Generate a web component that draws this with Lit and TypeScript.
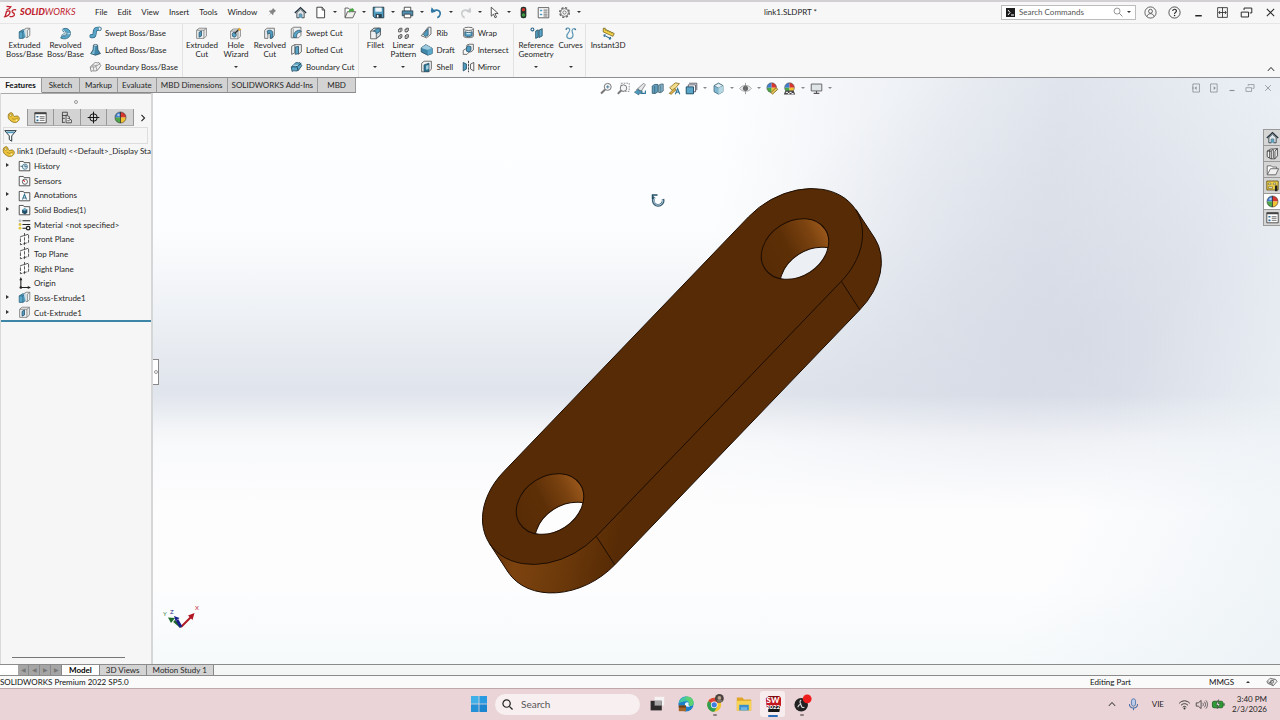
import { LitElement, html, svg, css, nothing } from "lit";
import { customElement, property } from "lit/decorators.js";

/* Icon bodies, each drawn on a 16 x 16 grid. */
const glyphs: Record<string, unknown> = {
  extrude: svg`<path d="M1.5 6l4-2.500h4v8l-3.500 2.500h-4.500z" fill="#5aa6c8" stroke="#2d6580"/><path d="M1.500 6h4.500v8M6 6l3.500-2.500" fill="none" stroke="#2d6580"/><path d="M7 3.500l3-2h4.500v9l-3 2.500h-2" fill="#eef2f4" fill-opacity=".8" stroke="#777"/><path d="M11.500 4v9M11.500 4l3-2.500" stroke="#777" fill="none"/>`,
  revolve: svg`<path d="M4 3c5-3.500 11 .5 10 6-1 5-7 7-12 4.500l2-3c3 1 5.500.5 6-2 .3-2-2-3.500-4.500-2.500z" fill="#5aa6c8" stroke="#2d6580"/><path d="M4 3l6 5.500M10 8.500L14 8" stroke="#dceaf2" fill="none"/><path d="M3 10l5-3 2 2-6 2z" fill="#cfe4ef" stroke="#2d6580" stroke-width=".7"/>`,
  sweep: svg`<path d="M3 12.500c5 1 3.500-4.500 4.500-7 .7-2 3-2.500 5.500-2" fill="none" stroke="#2d6580" stroke-width="5" stroke-linecap="round"/><path d="M3 12.500c5 1 3.500-4.500 4.500-7 .7-2 3-2.500 5.500-2" fill="none" stroke="#5aa6c8" stroke-width="3.200" stroke-linecap="round"/><ellipse cx="13.200" cy="3.500" rx="1.600" ry="2.200" fill="#e4eff5" stroke="#2d6580" stroke-width=".6"/>`,
  loft: svg`<path d="M5.500 2.500h5l.5 6 3 4.500-6 2-6-2 3-4.500z" fill="#3f86a8" stroke="#1f4a60"/><path d="M6 3l-.3 6L3 12.800l3.500 1L8 3z" fill="#7ebad5"/><ellipse cx="8" cy="2.800" rx="2.500" ry="1.100" fill="#dcebf2" stroke="#1f4a60" stroke-width=".6"/>`,
  boundary: svg`<path d="M1.500 8.500L7 3.500c2-1.500 3 1 5-.5l2.500 4-4 5.500c-3 2.500-5-.5-8 1.500z" fill="#f2f2f2" stroke="#777"/><path d="M2 9c3-2 4 1 6.500-1l5.500-4M8.500 8l1.500 5M4 6.500c2-1 4 1.500 6-.5M5 8l1 5" fill="none" stroke="#777" stroke-width=".8"/>`,
  cut: svg`<path d="M2 4l3-2.500h9v9.500l-3 3H2z" fill="#f0f1f2" stroke="#777"/><path d="M2 4h9v10M11 4l3-2.500" fill="none" stroke="#777"/><path d="M5 6.500l3-1.500v6l-3 1.500z" fill="#4f9cc0" stroke="#2d5870"/>`,
  hole: svg`<path d="M2 5l3-2.500h9v9l-3 3H2z" fill="#f0f1f2" stroke="#777"/><path d="M2 5h9v9.500" fill="none" stroke="#777"/><ellipse cx="6.500" cy="9.500" rx="2.500" ry="3" fill="#5aa6c8" stroke="#2d5870"/><path d="M7 8l6-6" stroke="#333" stroke-width="1.600"/><path d="M13 .5l.8 1.700 1.700.6-1.700.8-.8 1.700-.8-1.700-1.700-.6 1.700-.7z" fill="#f0b429"/>`,
  revcut: svg`<path d="M2 4l3-2.500h9V10l-3 4H9V9c0-2-3-2-3 0v5H2z" fill="#e8ecef" stroke="#666"/><path d="M5 5c3-2 7-1 7 2v6l-3 1V9c0-2-2.500-2-3 0z" fill="#4f9cc0" stroke="#2d5870"/>`,
  sweptcut: svg`<path d="M1.500 3.500l3-2h9v10l-3 3h-9z" fill="#eef0f1" stroke="#666"/><path d="M4 14c0-5 2-8 8-9l2 2c-5 1-6 3-6 7z" fill="#5aa6c8" stroke="#2d5870"/><path d="M4 3v8" stroke="#888"/>`,
  loftcut: svg`<path d="M2 4l4-2v10l-4 2zM6 2h8v9l-4 3V5" fill="#eef0f1" stroke="#555"/><path d="M6.500 5l4-1v9l-4 1z" fill="#5aa6c8" stroke="#2d5870"/>`,
  boundcut: svg`<path d="M1.500 8.500L7 3.500c2-1.500 3 1 5-.5l2.500 4-4 5.500c-3 2.500-5-.5-8 1.500z" fill="#5aa6c8" stroke="#234e63"/><path d="M2 9c3-2 4 1 6.500-1l5.500-4M8.500 8l1.500 5" fill="none" stroke="#163a4c"/><path d="M4 6.500c2-1 4 1.500 6-.5" stroke="#e4f1f7" fill="none"/>`,
  fillet: svg`<path d="M2 5l4-3.500h8v8.500l-5 4.500H2z" fill="#f0f1f2" stroke="#555"/><path d="M6 1.500h8V10l-5 4V8c0-2-1-3-3-3H2z" fill="#cfdfe7" stroke="#555"/><path d="M5.500 5c2 0 3.500 1 3.500 3.500L14 5c0-2-1-3.500-3-3.500z" fill="#4f9cc0" stroke="#2d5870"/>`,
  pattern: svg`<g fill="#f5f5f5" stroke="#333"><path d="M2 3l1.500-1.500H6v3L4.500 6H2zM10 3l1.500-1.500H14v3L12.500 6H10zM2 11l1.500-1.500H6v3L4.500 14H2zM10 11l1.500-1.500H14v3L12.500 14H10z"/></g><path d="M2 3h2.500v3M10 3h2.500v3M2 11h2.500v3M10 11h2.500v3" fill="none" stroke="#333" stroke-width=".7"/>`,
  rib: svg`<path d="M1.500 12L10 1.500h3.500V10L8 14.500z" fill="#eceff1" stroke="#555"/><path d="M4 10.500L10 3v8l-3 2z" fill="#4f9cc0" stroke="#2d5870"/>`,
  draft: svg`<path d="M1.500 6L7 2l8 4.500V13l-5.500 2-8-4z" fill="#3f86a8" stroke="#234e63"/><path d="M1.500 6L7 2l8 4.500-5.500 2z" fill="#9ccbe0"/><path d="M9.500 8.500L15 6.500V13l-5.500 2z" fill="#5aa6c8"/>`,
  shell: svg`<path d="M2 4l3-2.500h9v9.500l-3 3.500H2z" fill="#eef0f1" stroke="#555"/><path d="M5 6l6-2v10H5z" fill="#2f7899" stroke="#234e63"/><path d="M7.500 7l3-1v5l-3 1z" fill="#a9d3e5"/>`,
  wrap: svg`<path d="M2 3.500v9c0 2.500 12 2.500 12 0v-9" fill="#e6ebee" stroke="#555"/><ellipse cx="8" cy="3.500" rx="6" ry="2" fill="#fafafa" stroke="#555"/><path d="M3.500 7c3 1.500 6 1.500 9 0v5c-3 1.500-6 1.500-9 0z" fill="#4f9cc0" stroke="#2d5870"/><path d="M5.500 9.500h5" stroke="#e4f1f7" stroke-width="1.400"/>`,
  intersect: svg`<path d="M6 2.500l3-1h5v7l-3 2.500H6z" fill="#eef0f1" stroke="#555"/><path d="M1.500 9L5 7h4v4l-3 3H1.500z" fill="#fafafa" stroke="#555"/><path d="M5.500 5L8 3.500l3 1V9l-2.500 2-3-1z" fill="#4f9cc0" stroke="#2d5870"/>`,
  mirror: svg`<path d="M1.500 3l4 2v6l-4 2.500z" fill="#4f9cc0" stroke="#234e63"/><path d="M14.500 3l-4 2v6l4 2.500z" fill="#fafafa" stroke="#444"/><path d="M8 1v14" stroke="#222" stroke-dasharray="3 1"/>`,
  refgeo: svg`<path d="M7 5l3-1.500v9L7 14zM11 4l4-2v9l-4 2z" fill="#5aa6c8" stroke="#234e63"/><circle cx="3" cy="3" r="1.800" fill="#fff" stroke="#1f5f85" stroke-width="1.300"/>`,
  curves: svg`<path d="M2.500 2.500c1-2 5-1.500 4.500 1.500C6.500 7 3 8 3.500 11.500 4 15 10 15.500 11 11c.6-3-1.500-4-1-7 .3-2 3-2.500 4-1" fill="none" stroke="#5c98b5" stroke-width="1.500"/><circle cx="2.800" cy="2.800" r="1" fill="#3b7290"/><circle cx="14" cy="3" r="1" fill="#3b7290"/>`,
  instant: svg`<path d="M1.500 1.500h2.500v1.500l11 5-1.500 3.500-12-5.500z" fill="#f3d34a" stroke="#6b5a14" stroke-width=".9"/><path d="M4.500 4.500l.7-1.500M7 5.700l.7-1.500M9.500 6.800l.7-1.500M12 8l.7-1.500" stroke="#6b5a14" stroke-width=".8"/><path d="M2 10l9 4.500M2 10l2.500-.3M2 10l1.200 2M11 14.500l-1-2.200M11 14.500l-2.500.4" fill="none" stroke="#2a6c94" stroke-width="1.300"/>`,
  home: svg`<path d="M1 8.500L8 2l7 6.500" fill="none" stroke="#24323c" stroke-width="1.600"/><path d="M3.500 8v6.500h3V10h3v4.500h3V8L8 4z" fill="#dfe6ea" stroke="#24323c"/><path d="M6.500 10h3v4.500h-3z" fill="#5aa6c8"/>`,
  doc: svg`<path d="M3.500 1.500h6.500L13 5v9.500H3.500z" fill="#fff" stroke="#333" stroke-width="1.100"/><path d="M10 1.500V5h3" fill="none" stroke="#333"/>`,
  open: svg`<path d="M2.500 14V2.500h4L8 4h4v3" fill="#fafafa" stroke="#444"/><path d="M2.500 14.500L5.500 7h10L12 14.500z" fill="#f1f1ee" stroke="#444"/><path d="M7 7.500c0-3 1.500-4 4-4V2l3 2.800-3 2.700V6C9.500 6 8.500 6.500 8 8z" fill="#49a942"/>`,
  save: svg`<path d="M1.500 1.500h13v13h-11l-2-2z" fill="#4f9cc0" stroke="#263b47" stroke-width="1.200"/><path d="M4 2h8v5H4z" fill="#f1f5f7"/><path d="M4.500 10h7.500v4.500H4.500z" fill="#263b47"/><path d="M6 11h2v3H6z" fill="#fff"/>`,
  print: svg`<path d="M4 6V1.500h8V6" fill="#fff" stroke="#333"/><path d="M1.500 6h13v6h-13z" fill="#4f8fb0" stroke="#263b47"/><path d="M4 10h8v4.500H4z" fill="#fff" stroke="#333"/>`,
  undo: svg`<path d="M4 6.500c5-3 9-.5 8.500 3.500-.3 2-1.500 3.500-3.500 4.500" fill="none" stroke="#2f78a3" stroke-width="2"/><path d="M1 6l1-4.500 5 5.500-5 1.500z" fill="#2f78a3"/>`,
  redo: svg`<path d="M12 6.500c-5-3-9-.5-8.500 3.500.3 2 1.500 3.500 3.500 4.500" fill="none" stroke="#c9cccd" stroke-width="2"/><path d="M15 6l-1-4.500L9 7l5 1.500z" fill="#c9cccd"/>`,
  cursor: svg`<path d="M4 1.500v11l2.700-2.500 2 4.500 1.800-.8-2-4.400h4z" fill="#fff" stroke="#333"/>`,
  light: svg`<rect x="4.500" y=".8" width="7" height="14.400" rx="3" fill="#25352b"/><circle cx="8" cy="4.500" r="2.100" fill="#d5332b"/><circle cx="8" cy="11" r="2.100" fill="#3f9b45"/>`,
  list: svg`<path d="M1.500 2h13v12.500h-13z" fill="#fff" stroke="#444"/><path d="M3.500 4.500h3v2h-3zM3.500 9.500h3v2h-3z" fill="#4f9cc0"/><path d="M8 5h5M8 7.500h5M8 10h5M8 12.300h5" stroke="#444"/>`,
  gear: svg`<circle cx="8" cy="8" r="5.800" fill="none" stroke="#666" stroke-width="2" stroke-dasharray="2.600 1.950"/><circle cx="8" cy="8" r="4.800" fill="#f7f7f7" stroke="#666"/><circle cx="8" cy="8" r="2" fill="none" stroke="#666"/>`,
  pin: svg`<path d="M9.500 1.500l5 5-1.500.5-2.500 2.500c0 1.500-.3 2.500-1 3.500L6.500 10l-5 4.500L6 9.500 3 6.500c1-.9 2-1 3.500-1L9 3z" fill="#848484"/>`,
  glass: svg`<circle cx="6.500" cy="6.500" r="4.800" fill="none" stroke="#777" stroke-width="1.200"/><path d="M10 10l5 5" stroke="#777" stroke-width="1.400"/>`,
  user: svg`<circle cx="8" cy="8" r="6.900" fill="none" stroke="#444"/><circle cx="8" cy="6.500" r="2.400" fill="none" stroke="#444"/><path d="M3.800 12.800c1-4.500 7.400-4.500 8.400 0" fill="none" stroke="#444"/>`,
  help: svg`<circle cx="8" cy="8" r="6.900" fill="none" stroke="#333"/><path d="M5.800 6.300c0-3 4.500-3 4.500-.2 0 1.700-2.200 1.700-2.200 3.700" fill="none" stroke="#222" stroke-width="1.400"/><circle cx="8.100" cy="11.800" r=".9" fill="#222"/>`,
  min: svg`<path d="M4 12h8" stroke="currentColor" stroke-width="1.800"/>`,
  span: svg`<path d="M2 2h12v12H2zM8 2v12M3.500 8h9M5 6L3.500 8 5 10M11 6l1.500 2L11 10" fill="none" stroke="currentColor"/>`,
  restore: svg`<path d="M1.500 7.500h9v6h-9zM5 5V2.500h9.500v6H12" fill="none" stroke="currentColor" stroke-width="1.200"/>`,
  close: svg`<path d="M3.500 3.500l9 9M12.500 3.500l-9 9" stroke="currentColor" stroke-width="1.300"/>`,
  prevwin: svg`<path d="M3 1.500h10.500v13H3zM3 6v4" fill="none" stroke="currentColor" stroke-width="1.300"/><path d="M9 5v6L5.500 8z" fill="currentColor"/>`,
  nextwin: svg`<path d="M2.500 1.500H13v13H2.500z" fill="none" stroke="currentColor" stroke-width="1.300"/><path d="M7.500 5v6L11 8z" fill="currentColor"/>`,
  part: svg`<path d="M1.500 5.500C2 1.500 7 .8 7.500 4.500c.2 2 1.500 2.800 3.500 1.800 3.500-1 5 2.700 3.500 5.200-2 3-6 3.500-8.500 1.500C3 11.500 1 9 1.500 5.500z" fill="#ecc53c" stroke="#8a6d12"/><circle cx="4.500" cy="5.200" r="1.400" fill="#fff5c8" stroke="#8a6d12" stroke-width=".7"/><path d="M6 9c2 1.800 5 1.300 7.500-.5" stroke="#8a6d12" stroke-width=".7" fill="none"/><circle cx="11.500" cy="11.500" r="1" fill="#fff5c8"/>`,
  props: svg`<path d="M1 2h14v12.500H1z" fill="#fff" stroke="#333"/><path d="M1 2h14v2H1z" fill="#444"/><path d="M3 6h2.500v2H3zM3 10.500h2.500v2H3z" fill="#2a6c94"/><path d="M7 7h6M7 9h6M7 11.500h6" stroke="#555"/>`,
  config: svg`<path d="M3 1.500h6v4H3zM3 5v9.500M3 9h3M3 14h3" fill="none" stroke="#333"/><path d="M7.500 5l4 2v3l2.500 1v3.500H7.500z" fill="#f4f4f4" stroke="#333"/><path d="M9 9h2M9 12h3" stroke="#333"/>`,
  target: svg`<circle cx="8" cy="8" r="4.600" fill="none" stroke="#111" stroke-width="1.200"/><path d="M8 .8v14.400M.8 8h14.400" stroke="#111" stroke-width="1.200"/>`,
  ball: svg`<path d="M8 8L8 1.200A6.800 6.800 0 0 0 1.200 8z" fill="#3f7fd0"/><path d="M8 8h6.800A6.800 6.800 0 0 0 8 1.200z" fill="#d8362f"/><path d="M8 8H1.200A6.800 6.800 0 0 0 8 14.800z" fill="#4ca64a"/><path d="M8 8v6.800A6.800 6.800 0 0 0 14.800 8z" fill="#f1c232"/><path d="M8 1.200v13.600" stroke="#222" stroke-width=".9"/><circle cx="8" cy="8" r="6.800" fill="none" stroke="#333" stroke-width=".7"/><circle cx="5.500" cy="5" r="1.500" fill="#fff" opacity=".6"/>`,
  chevron: svg`<path d="M5.500 3l5 5-5 5" fill="none" stroke="#222" stroke-width="1.700"/>`,
  funnel: svg`<path d="M1 2h14L9.500 8.500V15l-3-2V8.500z" fill="#fdfdfd" stroke="#24323c" stroke-width="1.200"/><path d="M2.500 3h11l-1.800 2.200H4.300z" fill="#4f9cc0"/>`,
  history: svg`<path d="M1.500 3h5l1 1.500h7v10h-13z" fill="#fafafa" stroke="#333"/><circle cx="8.500" cy="9.500" r="3.200" fill="#d9e8ef" stroke="#3d7794"/><path d="M8.500 7.500v2H11M3 9h3" stroke="#24506a" fill="none"/>`,
  sensors: svg`<path d="M1.500 3h5l1 1.500h7v10h-13z" fill="#fafafa" stroke="#333"/><circle cx="8.500" cy="9.500" r="3.200" fill="#fff" stroke="#444"/><path d="M8.500 9.500l-2-2" stroke="#c22" stroke-width="1.300"/>`,
  notes: svg`<path d="M1.500 3h5l1 1.500h7v10h-13z" fill="#fafafa" stroke="#333"/><path d="M5.500 13L8 6.500l2.500 6.500M6.500 11h3" stroke="#3d7794" stroke-width="1.300" fill="none"/>`,
  bodies: svg`<path d="M1.500 3h5l1 1.500h7v10h-13z" fill="#fafafa" stroke="#333"/><path d="M5 8.500l3-2 3.500 1.500v4l-3 2L5 12z" fill="#24506a"/><path d="M5 8.500l3-2 3.500 1.500-3 1.500z" fill="#6fb0cd"/>`,
  material: svg`<path d="M5.500 3.500H15M5.500 8H15M5.500 12.500H10" stroke="#222" stroke-width="1.300"/><circle cx="2.500" cy="3.500" r="1.800" fill="#b9bcc0"/><circle cx="2.500" cy="8" r="1.800" fill="#d9c24a"/><circle cx="2.500" cy="12.500" r="1.800" fill="#e4c93a"/><circle cx="12.500" cy="12.500" r="2.200" fill="none" stroke="#222" stroke-width="1.600"/>`,
  plane: svg`<path d="M3 4.500L13 1.500v10L3 14.500z" fill="#fdfdfd" stroke="#444" stroke-width="1.100" stroke-dasharray="4.500 1.200"/><path d="M8 0v16" stroke="#333" stroke-dasharray="4 1.300"/>`,
  origin: svg`<path d="M3.500 2v11H14" stroke="#222" stroke-width="1.300" fill="none"/><path d="M3.500 0L5.300 4H1.700zM16 13l-4 1.800v-3.600z" fill="#222"/><circle cx="3.500" cy="13" r="1.600" fill="#222"/>`,
  zoomfit: svg`<circle cx="9.500" cy="6" r="4.300" fill="#f4f6f7" stroke="#777" stroke-width="1.200"/><path d="M6.300 9.200l-5 5" stroke="#777" stroke-width="2.400"/><path d="M7.500 6h4M9.500 4v4" stroke="#3b6f90"/>`,
  zoomarea: svg`<path d="M5 1.500h10v10H5z" fill="none" stroke="#777" stroke-dasharray="2 1.300"/><circle cx="8" cy="7.500" r="4" fill="#f4f6f7" stroke="#777" stroke-width="1.200"/><path d="M5 10.500L1 14.700" stroke="#777" stroke-width="2.400"/>`,
  prevview: svg`<path d="M3 9.500L12 1.500l2 2L9 11z" fill="#e4e8ea" stroke="#777"/><path d="M9 14h5v-3.500" fill="none" stroke="#2f7899" stroke-width="1.400"/><path d="M.5 12.500L6 8.500V11h4v3H6v2z" fill="#4f9cc0" stroke="#2d5870" stroke-width=".7"/>`,
  section: svg`<path d="M1.500 5l3-2h4v9l-3 2h-4z" fill="#5f9fbd" stroke="#33586b"/><path d="M9.500 4l3-1.500h2.500v8.500l-3 2h-2.500z" fill="#8bbbd1" stroke="#44606e"/><path d="M4.500 5v9M12 4v9" stroke="#33586b" stroke-width=".8"/>`,
  annview: svg`<path d="M2 7l7-6 5 1-8 9z" fill="#f1dd8c" stroke="#8c6d22"/><path d="M1.500 14l6-6 2.500 1.500-6 5.500z" fill="#e0b24a" stroke="#8c6d22"/><path d="M9 15l2.800-7 2.700 7M10 12.500h3.500" stroke="#2f7899" stroke-width="1.400" fill="none"/>`,
  orient: svg`<path d="M1.500 6h9v8.500h-9z" fill="#5aa6c8" stroke="#24506a" stroke-width="1.200"/><path d="M4 6V3.500h9V12h-2.500" fill="none" stroke="#445" /><path d="M5 1.500h9.500V10" fill="none" stroke="#445"/>`,
  cube: svg`<path d="M2.500 4.500L8 1.500l5.500 3v7.500L8 15l-5.500-3z" fill="#7fb8d0" stroke="#446b7e"/><path d="M2.500 4.500L8 7.500l5.500-3L8 1.500z" fill="#e2f0f6" stroke="#446b7e" stroke-width=".8"/><path d="M8 7.500V15l5.500-3V4.500z" fill="#b6d7e4"/>`,
  eye: svg`<path d="M.8 8C4 3 12 3 15.200 8 12 12.500 4 12.500.8 8z" fill="#eceeef" stroke="#9a9a9a"/><circle cx="8" cy="7.800" r="3.200" fill="#666"/><path d="M8 1v14" stroke="#777" stroke-width=".8"/>`,
  scene: svg`<path d="M8 7V1A6 6 0 0 0 2 7z" fill="#3f7fd0"/><path d="M8 7h6a6 6 0 0 0-6-6z" fill="#d8362f"/><path d="M8 7H2a6 6 0 0 0 6 6z" fill="#4ca64a"/><path d="M8 7v6a6 6 0 0 0 6-6z" fill="#f1c232"/><circle cx="8" cy="7" r="6" fill="none" stroke="#555" stroke-width=".7"/><path d="M1 15.500l2-5h10l2 5z" fill="#444"/><path d="M3.500 12h2.500v1.500H3.500zM8 12h2.500v1.500H8zM6 13.500h2V15H6zM10.500 13.500H13V15h-2.500z" fill="#eee"/>`,
  appear: svg`<path d="M7 7V1A6 6 0 0 0 1 7z" fill="#3f7fd0"/><path d="M7 7h6a6 6 0 0 0-6-6z" fill="#d8362f"/><path d="M7 7H1a6 6 0 0 0 6 6z" fill="#4ca64a"/><path d="M7 7v6a6 6 0 0 0 6-6z" fill="#f1c232"/><circle cx="7" cy="7" r="6" fill="none" stroke="#555" stroke-width=".7"/><path d="M6 13l6.500-6 2 2-6.500 6z" fill="#e7c75e" stroke="#7b6420"/>`,
  monitor: svg`<path d="M1.500 2.500h13v8.500h-13z" fill="#dfe4e7" stroke="#666" stroke-width="1.200"/><path d="M8 11v3M4.500 14h7" stroke="#555" stroke-width="1.300"/>`,
  library: svg`<path d="M1.500 5L6 2.500h3L14 2v9l-3 3.500H6L1.500 12z" fill="#f5f5f5" stroke="#333"/><path d="M4.500 4v9.500M6.500 5v9.500M9 3.500v10M11 5v9.500M1.500 5l5 0L9 2.500M11 5l3-3" fill="none" stroke="#333"/>`,
  folder: svg`<path d="M1.500 14V3.500h5L8 5h5v2.500" fill="#fff" stroke="#555"/><path d="M1.500 14.500l4-7.500h10l-3.500 7.500z" fill="#f0f0f0" stroke="#555"/>`,
  palette: svg`<path d="M1 2.500h14v11H1z" fill="#f0d24c" stroke="#5b4b12"/><path d="M3 5h3v2H3zM9 5h3v2H9zM3 9.500h5v2H3z" fill="#fff" stroke="#5b4b12" stroke-width=".7"/><path d="M11 8h3v7h-3z" fill="#222"/>`,
  mic: svg`<rect x="5.500" y="1" width="5" height="9" rx="2.500" fill="#b9cbe8" stroke="#4a6fa5"/><path d="M3 7.500c0 6.500 10 6.500 10 0M8 12.500V15" fill="none" stroke="#4a6fa5" stroke-width="1.300"/>`,
  wifi: svg`<path d="M1.500 6.500c4-4 9-4 13 0M3.700 9c2.800-2.700 5.800-2.700 8.600 0M5.800 11.300c1.500-1.300 2.900-1.300 4.400 0" fill="none" stroke="#333" stroke-width="1.200"/><circle cx="8" cy="13" r="1.200" fill="#333"/>`,
  sound: svg`<path d="M1.500 6h2.500l3.500-3v10L4 10H1.500z" fill="none" stroke="#444" stroke-width="1.100"/><path d="M9.500 6c1 1.300 1 2.700 0 4M11.500 4.500c2 2.300 2 4.700 0 7M13.500 3c2.500 3 2.500 7 0 10" fill="none" stroke="#444"/>`,
  battery: svg`<rect x=".5" y="4" width="13" height="8" rx="2" fill="#2f9c35" stroke="#1c5c20"/><path d="M14 6.500h1.500v3H14z" fill="#1c5c20"/><path d="M8 2L5 8.500h2.500L6.500 13 10 7H7.500z" fill="#fff" stroke="#222" stroke-width=".6"/>`,
  up: svg`<path d="M3 11l5-5.500 5 5.500" fill="none" stroke="#222" stroke-width="1.600"/>`,
  tag: svg`<path d="M0 7l5-5 9 2 2 3-6 7-9-4z" fill="#eee" stroke="#333"/><circle cx="8" cy="7.500" r="2.500" fill="none" stroke="#333"/><path d="M1 7l9 6M3 10.500l9-7" stroke="#333" stroke-width=".8"/>`,
};

/* Taskbar program marks, each drawn on a 20 x 20 grid. */
const appGlyphs: Record<string, unknown> = {
  windows: svg`<g fill="#1b86cf"><path d="M0 0h9.500v9.500H0z" fill="#3fb0e8"/><path d="M10.500 0H20v9.500h-9.500z" fill="#2a9be0"/><path d="M0 10.500h9.500V20H0z" fill="#2591d6"/><path d="M10.500 10.500H20V20h-9.500z"/></g>`,
  tasks: svg`<path d="M7 1h12v11H7z" fill="#f5f3f3"/><path d="M2 6h14v12H2z" fill="#2c2a2b"/><path d="M7 6h9v6H7z" fill="#a8a5a6"/>`,
  edge: svg`<circle cx="10" cy="10" r="9.500" fill="#1d7fc9"/><path d="M1 9C2 3 7 .5 11 .5c6 0 9 4.500 8.500 8.500-.4 3-3 4-5.500 3.500 1-4-1-6-4-6S3 8 1 9z" fill="#42c6a6"/><path d="M11 .5c6 0 9 4.500 8.500 8.500-.4 3-3 4-5.500 3.500.7-4-.8-7.500-5-9z" fill="#6bd45f" opacity=".7"/><path d="M13.500 8.500c-3-2-6 1-4.500 3.500 1.500 2 5 1.800 6 1-1.500 0-2.500-2-1.500-4.500z" fill="#e9f6fb"/><path d="M1 12h9v7H1z" fill="#a5662b"/><path d="M1 12h9v2.500H1z" fill="#6e3f17"/>`,
  chrome: svg`<circle cx="9" cy="11" r="8.800" fill="#f4c430"/><path d="M9 11L1.400 6.600A8.800 8.800 0 0 1 16.600 6.600z" fill="#db4437"/><path d="M9 11L1.400 6.600A8.800 8.800 0 0 0 9 19.800l3.500-6z" fill="#2f9e52"/><circle cx="9" cy="11" r="4.200" fill="#fff"/><circle cx="9" cy="11" r="3.300" fill="#3f7de0"/><circle cx="15.500" cy="3" r="5.500" fill="#4a423c"/><circle cx="15.500" cy="2.500" r="2.400" fill="#b8a48f"/><path d="M11.500 6c2-2 6-2 8 0-2 3-6 3-8 0z" fill="#7c7268"/>`,
  files: svg`<path d="M1 2h7l2 2.500h9V18H1z" fill="#e0a526"/><path d="M1 6h18v12H1z" fill="#f8d352"/><path d="M4 11h12v7H4z" fill="#3c8fcb"/><path d="M6 14h8v4H6z" fill="#6db5e4"/>`,
  sw: svg`<path d="M1 3l4-3h13l2 2.500V12l-3 2H2z" fill="#c3181f"/><path d="M1 3l4-3h13l-4 3z" fill="#7d0d12"/><path d="M4 12.500h15l-1 7.500H4z" fill="#161616"/>`,
  obs: svg`<circle cx="9" cy="11" r="8.500" fill="#222"/><path d="M9 5c-2 1-2 4 0 5M5 14c0-2 2-4 4-3M13 14c-2 1-4 0-4-3" fill="none" stroke="#ddd" stroke-width="1.500"/><circle cx="16.500" cy="3.500" r="5.500" fill="#ee1c1c"/>`,
};

@customElement("sw-icon")
export class SwIcon extends LitElement {
  @property() name = "";
  @property() size = "m";
  static styles = css`
    :host { display: inline-flex; flex: none; }
    svg { display: block; overflow: visible; }
    .s { width: 10px; height: 10px; }
    .m { width: 13px; height: 13px; }
    .app { width: 16px; height: 16px; }
  `;
  render() {
    return this.size === "app"
      ? html`<svg class="app" viewBox="0 0 20 20" aria-hidden="true">${appGlyphs[this.name]}</svg>`
      : html`<svg class=${this.size} viewBox="0 0 16 16" aria-hidden="true">${glyphs[this.name]}</svg>`;
  }
}

interface Big { icon: string; label: string; drop?: boolean; size: string; }
interface Group { big: Big[]; small: [string, string][][]; }

const ribbon: Group[] = [
  {
    big: [
      { icon: "extrude", label: "Extruded Boss/Base", size: "wide" },
      { icon: "revolve", label: "Revolved Boss/Base", size: "wide" },
    ],
    small: [[["sweep", "Swept Boss/Base"], ["loft", "Lofted Boss/Base"], ["boundary", "Boundary Boss/Base"]]],
  },
  {
    big: [
      { icon: "cut", label: "Extruded Cut", size: "mid" },
      { icon: "hole", label: "Hole Wizard", size: "mid", drop: true },
      { icon: "revcut", label: "Revolved Cut", size: "mid" },
    ],
    small: [[["sweptcut", "Swept Cut"], ["loftcut", "Lofted Cut"], ["boundcut", "Boundary Cut"]]],
  },
  {
    big: [
      { icon: "fillet", label: "Fillet", size: "slim", drop: true },
      { icon: "pattern", label: "Linear Pattern", size: "slim", drop: true },
    ],
    small: [
      [["rib", "Rib"], ["draft", "Draft"], ["shell", "Shell"]],
      [["wrap", "Wrap"], ["intersect", "Intersect"], ["mirror", "Mirror"]],
    ],
  },
  {
    big: [
      { icon: "refgeo", label: "Reference Geometry", size: "wide", drop: true },
      { icon: "curves", label: "Curves", size: "slim", drop: true },
    ],
    small: [],
  },
  { big: [{ icon: "instant", label: "Instant3D", size: "wide" }], small: [] },
];

const quick: [string, boolean][] = [
  ["home", false], ["doc", true], ["open", true], ["save", true], ["print", true], ["undo", true],
  ["redo", true], ["cursor", true], ["light", false], ["list", false], ["gear", true],
];

const headsUp: [string, boolean][] = [
  ["zoomfit", false], ["zoomarea", false], ["prevview", false], ["section", false], ["annview", false],
  ["orient", true], ["cube", true], ["eye", true], ["appear", false], ["scene", true], ["monitor", true],
];

const tree: [string, string, boolean][] = [
  ["history", "History", true], ["sensors", "Sensors", false], ["notes", "Annotations", true],
  ["bodies", "Solid Bodies(1)", true], ["material", "Material <not specified>", false],
  ["plane", "Front Plane", false], ["plane", "Top Plane", false], ["plane", "Right Plane", false],
  ["origin", "Origin", false], ["extrude", "Boss-Extrude1", true], ["cut", "Cut-Extrude1", true],
];

@customElement("app-root")
export class AppRoot extends LitElement {
  static styles = css`
    :host {
      display: flex; flex-direction: column; height: 100vh; overflow: hidden;
      font: 8px/10px Lato, "Open Sans", sans-serif; color: #262626; background: #f7f7f7;
    }
    * { box-sizing: border-box; }
    button, input {
      font: inherit; color: inherit; background: none; border: 0; padding: 0; margin: 0; outline: 0;
    }
    button { display: inline-flex; align-items: center; justify-content: center; white-space: nowrap; }
    .drop { width: 0; height: 0; border: 2px solid transparent; border-top-color: #333; border-bottom: 0; flex: none; }

    .title { display: flex; align-items: center; height: 24px; flex: none; border-top: 2px solid #d2d0d2; border-bottom: 1px solid #e6e6e6; padding-bottom: 1px; }
    .brand { display: flex; align-items: center; gap: 3px; width: 95px; padding-left: 3px; color: #c0202c; flex: none; }
    .brand svg { width: 14px; height: 14px; }
    .word { font-size: 9px; font-style: italic; line-height: 12px; }
    .word b { font-weight: 900; }
    .menu { display: flex; align-items: center; gap: 10px; flex: none; width: 184px; }
    .quick { display: flex; align-items: center; flex: none; padding-left: 15px; gap: 7px; }
    .pair { display: inline-flex; align-items: center; gap: 6px; width: 22px; }
    .quick .pair:last-child { margin-left: 1px; }
    .file { flex: 1; text-align: center; }
    .search { display: flex; align-items: center; gap: 4px; width: 135px; height: 15px; padding: 0 4px; background: #fff; border: 1px solid #bdbdbd; }
    .search input { flex: 1; min-width: 0; }
    .search input::placeholder, .find input::placeholder { color: #555; opacity: 1; }
    .prompt { width: 9px; height: 9px; background: #1d1d1d; }
    .window { display: flex; gap: 11px; padding: 0 3px 0 8px; }

    .ribbon { display: flex; height: 54px; flex: none; border-bottom: 1px solid #8e8e8e; }
    .group { display: flex; border-right: 1px solid #e2e2e2; }
    .group:first-child { padding-left: 4px; }
    .group + .group { padding-left: 2px; }
    .group:last-of-type { border-right: 0; }
    .big { flex-direction: column; justify-content: flex-start; white-space: normal; line-height: 9px; padding-top: 3px; }
    .big span { height: 18px; margin-top: 1px; }
    .big .drop { margin-top: 7px; }
    .wide { width: 41px; }
    .mid { width: 34px; }
    .slim { width: 28px; }
    .stack { display: grid; grid-template-rows: repeat(3, 17px); padding: 0 4px 0 3px; align-content: start; }
    .stack button { justify-content: flex-start; gap: 3px; }
    .fold { margin-left: auto; align-self: flex-end; padding: 0 4px 3px; }

    .work { position: relative; flex: 1; min-height: 0; display: flex; }
    .side { width: 153px; flex: none; display: flex; flex-direction: column; background: #fff; }
    .tabs { display: flex; position: relative; z-index: 1; height: 15px; flex: none; width: max-content; }
    .tabs button { min-width: 38px; height: 15px; padding: 0 4px; background: #d3d3d3; border-right: 1px solid #9a9a9a; border-bottom: 1px solid #8a8a8a; }
    .tabs .on { min-width: 42px; background: #f7f7f7; border-bottom-color: #f7f7f7; font-weight: 700; color: #111; }
    .panel { flex: 1; min-height: 0; display: flex; flex-direction: column; background: #f6f6f6; border-right: 2px solid #d4d6d8; border-left: 1px solid #d9d9d9; }
    .grip { height: 16px; border-top: 1px solid #aaa; display: flex; align-items: center; justify-content: center; flex: none; }
    .grip i, .handle i { width: 4px; height: 4px; border: 1px solid #999; border-radius: 50%; }
    .modes { display: grid; grid-template-columns: repeat(5, 1fr) 17px; height: 17px; flex: none; }
    .modes button { background: #d3d3d3; border-right: 1px solid #999; border-bottom: 1px solid #aaa; }
    .modes .on, .modes .more { background: none; border-bottom: 0; }
    .modes .more { border: 0; }
    .filter { display: flex; align-items: center; gap: 4px; height: 17px; margin: 1px 3px 0 2px; border: 1px solid #ddd; flex: none; }
    .filter input { flex: 1; min-width: 0; }
    .tree { display: grid; grid-auto-rows: 1fr; height: 178px; margin: 0; padding: 0; list-style: none; flex: none; border-bottom: 2px solid #3d86a8; }
    .tree li { display: flex; align-items: center; gap: 3px; padding-left: 1px; white-space: nowrap; }
    .tree .root { gap: 2px; }
    .tree .node { padding-left: 4px; }
    .twist { width: 10px; height: 6px; flex: none; display: flex; padding-left: 1px; }
    .twist i { border: 2px solid transparent; border-width: 2px 0 2px 3px; border-left-color: #333; height: 0; }
    .scroll { margin: auto 26px 6px 11px; border-top: 1px solid #777; flex: none; }

    .view {
      flex: 1; min-width: 0; position: relative; display: flex; flex-direction: column;
      background:
        linear-gradient(115deg, rgba(236, 243, 246, 0) 80%, rgba(236, 242, 246, .9) 100%),
        linear-gradient(180deg, rgba(253, 253, 254, 0) 54%, rgba(253, 253, 254, .6) 62%, #fdfdfe 74%, #fdfdfe 86%, #f6fafb 100%),
        radial-gradient(ellipse 30% 50% at 82% 45%, rgba(210, 214, 226, .7), rgba(214, 219, 229, 0)),
        linear-gradient(97deg, rgba(222, 227, 235, 0) 48%, rgba(222, 227, 235, .9) 76%, rgba(230, 236, 242, .9) 90%, #e9eff4 100%),
        linear-gradient(180deg, #fdfeff 0, #fcfdfe 26%, #eef1f5 40%, #e0e4ec 53%, #e4e8ee 57%, #f2f4f7 63%);
    }
    .scene { position: absolute; inset: 0; width: 100%; height: 100%; }
    .handle { position: absolute; left: 0; top: 48%; width: 6px; height: 26px; background: #fff; border: 1px solid #888; border-left: 0; display: flex; align-items: center; justify-content: center; }
    .hud { position: relative; display: flex; align-items: center; justify-content: center; gap: 4px; height: 20px; }
    .hud .pair { gap: 5px; width: 23px; }
    .hud .drop { border-top-color: #888; }
    .docs { position: absolute; right: 7px; top: 3px; display: flex; gap: 7px; color: #8a8f93; }
    .docs button { width: 11px; height: 14px; }
    .pane { position: absolute; right: 0; top: 51px; display: flex; flex-direction: column; border-left: 1px solid #999; border-top: 1px solid #999; }
    .pane button { width: 16px; height: 16px; background: #d5d5d5; border-bottom: 1px solid #999; }
    .pane .on { background: #fff; }
    .axis { font-size: 6px; }

    .sheets { display: flex; height: 11px; flex: none; border-top: 1px solid #8b8b8b; background: #f4f5f5; }
    .sheets button { padding: 0 6px; background: #d3d3d3; border-right: 1px solid #888; }
    .sheets .on { background: #fff; font-weight: 700; color: #000; padding: 0 7px; }
    .steps { display: flex; padding-left: 18px; background: #fff; }
    .sheets .steps button { width: 11px; padding: 0; background: #a5a5a5; color: #777; font-size: 6px; }
    .status { display: flex; align-items: center; height: 13px; flex: none; border-top: 1px solid #8b8b8b; background: #fafafa; color: #111; }
    .status .mode { margin-left: auto; }
    .status .units { margin-left: 78px; gap: 12px; }
    .status .units .drop { transform: rotate(180deg); }
    .status .tagged { margin: 0 3px 0 17px; }

    .task { display: grid; grid-template-columns: 1fr auto 1fr; align-items: center; height: 32px; flex: none; background: #ead4d7; border-top: 1px solid #bfa8ac; padding-bottom: 1px; }
    .apps { grid-column: 2; display: flex; align-items: center; gap: 4px; }
    .app { position: relative; width: 25px; height: 26px; border-radius: 3px; }
    .app.on { background: #f7ecee; }
    .app.run::after { content: ""; position: absolute; bottom: 1px; left: 11px; width: 4px; height: 2px; border-radius: 1px; background: #8d7e81; }
    .app.on::after { left: 8px; width: 10px; background: #2b6cb8; bottom: 0; }
    .swmark { position: absolute; left: 5px; top: 6px; width: 16px; color: #fff; font-size: 8px; font-weight: 900; line-height: 7px; }
    .swmark small { display: block; font-size: 6px; line-height: 6px; }
    .find { display: flex; align-items: center; gap: 8px; width: 145px; height: 21px; padding: 0 7px; border-radius: 11px; background: #f7eff0; font-size: 10px; }
    .find input { flex: 1; min-width: 0; }
    .find svg { width: 11px; height: 11px; }
    .tray { display: flex; align-items: center; justify-content: flex-end; gap: 4px; padding-right: 13px; }
    .tray .key { margin: 0 10px 0 8px; }
    .tray .mic { margin-left: 6px; }
    .clock { text-align: right; line-height: 10px; min-width: 38px; display: block; }
  `;

  private tool(name: string, drop: boolean) {
    return drop
      ? html`<span class="pair"><button aria-label=${name}><sw-icon name=${name}></sw-icon></button><i class="drop"></i></span>`
      : html`<button aria-label=${name}><sw-icon name=${name}></sw-icon></button>`;
  }

  private scene() {
    return html`<svg class="scene" viewBox="153 78 1127 586" role="img" aria-label="Link part">
      <defs>
        <linearGradient id="side" gradientUnits="userSpaceOnUse" x1="500" y1="548" x2="612" y2="572">
          <stop offset="0" stop-color="#6a370a" /><stop offset=".15" stop-color="#7d430f" />
          <stop offset=".5" stop-color="#6f3b0b" /><stop offset="1" stop-color="#572b05" />
        </linearGradient>
        <linearGradient id="bore" x1="0" y1=".8" x2="1" y2=".3">
          <stop offset="0" stop-color="#562b05" /><stop offset=".45" stop-color="#5d2f07" />
          <stop offset=".75" stop-color="#7a420f" /><stop offset="1" stop-color="#a05c1e" />
        </linearGradient>
        <clipPath id="low"><ellipse cx="550" cy="504" rx="36" ry="27.500" transform="rotate(-33 550 504)" /></clipPath>
        <clipPath id="high"><ellipse cx="795" cy="249" rx="36" ry="27.500" transform="rotate(-33 795 249)" /></clipPath>
      </defs>
      <g stroke="#1d0d02" stroke-width="1">
        <path fill="url(#side)" d="M489.400 543.400L508 572A72.300 54.700 -33 0 0 614.800 564.800L859.800 309.800A72.300 54.700 -33 0 0 874.600 238L856 209.500L700 300z" />
        <path fill="#562b05" d="M503.700 471.700A72.300 54.700 -33 0 0 596.300 536.300L841.300 281.300A72.300 54.700 -33 0 0 748.700 216.700z" />
        <path d="M596.300 536.300l18.500 28.500M841.300 281.300l18.500 28.500" />
        <g fill="url(#bore)" stroke="none">
          <circle cx="550" cy="504" r="37" clip-path="url(#low)" />
          <circle cx="795" cy="249" r="37" clip-path="url(#high)" />
        </g>
        <g clip-path="url(#low)"><ellipse cx="568.500" cy="532.500" rx="36" ry="27.500" transform="rotate(-33 568.500 532.500)" fill="#fdfdfe" /></g>
        <g clip-path="url(#high)"><ellipse cx="813.500" cy="277.500" rx="36" ry="27.500" transform="rotate(-33 813.500 277.500)" fill="#eceff4" /></g>
        <g fill="none">
          <ellipse cx="550" cy="504" rx="36" ry="27.500" transform="rotate(-33 550 504)" />
          <ellipse cx="795" cy="249" rx="36" ry="27.500" transform="rotate(-33 795 249)" />
        </g>
      </g>
      <g class="axis">
        <path d="M181 627l11-11" stroke="#b01824" stroke-width="2" /><path d="M194.500 613l-2 7-4.500-4.500z" fill="#b01824" />
        <path d="M181 627l-7-6" stroke="#1f6b2c" stroke-width="2.500" /><path d="M168 617.500l7 .5-4 5z" fill="#1f6b2c" />
        <path d="M181 627l-4-7" stroke="#1a1f8c" stroke-width="3" /><path d="M174 616l5.500 2-4 3z" fill="#1a1f8c" />
        <text x="163" y="616" fill="#3c8a48">Y</text><text x="170" y="614" fill="#1a1f8c">Z</text><text x="195" y="610" fill="#c2303a">X</text>
      </g>
      <g fill="none">
        <path d="M654.500 197a5 5 0 1 0 8.500 2" stroke="#3b5f74" stroke-width="2.600" />
        <path d="M655 197.500a4.500 4.500 0 1 0 7.500 2" stroke="#b9d6e4" stroke-width="1" />
        <path d="M652.500 199v-4h5" stroke="#24506a" stroke-width="1.500" />
      </g>
    </svg>`;
  }

  render() {
    return html`
      <header class="title">
        <div class="brand">
          <svg viewBox="0 0 16 16" aria-hidden="true"><path d="M4 1.500l5 .5c-1 2-3 3-5 3.500M1 13.500c4 0 7-3 7-5.500 0-1.500-2-1.500-4-.5L2.500 13M15 5.500c-3-.8-5 .5-4.500 2.200.5 1.500 3 1.500 2.500 3.500-.4 1.800-3 2.500-5.500 1.800" fill="none" stroke="#c0202c" stroke-width="1.500" /></svg>
          <span class="word"><b>SOLID</b>WORKS</span>
        </div>
        <nav class="menu">
          ${["File", "Edit", "View", "Insert", "Tools", "Window"].map((m) => html`<button>${m}</button>`)}
          <button aria-label="Pin"><sw-icon name="pin" size="s"></sw-icon></button>
        </nav>
        <div class="quick">${quick.map(([n, d]) => this.tool(n, d))}</div>
        <div class="file">link1.SLDPRT *</div>
        <label class="search">
          <svg class="prompt" viewBox="0 0 9 9" aria-hidden="true"><path d="M2 2l2 2.500L2 7M5 7h3" fill="none" stroke="#fff" /></svg>
          <input type="text" placeholder="Search Commands" aria-label="Search Commands" />
          <sw-icon name="glass" size="s"></sw-icon><i class="drop"></i>
        </label>
        <div class="window">
          ${["user", "help", "min", "span", "restore", "close"].map((n) => html`<button aria-label=${n}><sw-icon name=${n}></sw-icon></button>`)}
        </div>
      </header>

      <div class="ribbon">
        ${ribbon.map((g) => html`<section class="group">
          ${g.big.map((b) => html`<button class="big ${b.size}"><sw-icon name=${b.icon}></sw-icon><span>${b.label}</span>${b.drop ? html`<i class="drop"></i>` : nothing}</button>`)}
          ${g.small.map((col) => html`<div class="stack">${col.map(([i, l]) => html`<button><sw-icon name=${i}></sw-icon>${l}</button>`)}</div>`)}
        </section>`)}
        <button class="fold" aria-label="Collapse"><sw-icon name="up" size="s"></sw-icon></button>
      </div>

      <main class="work">
        <aside class="side">
          <nav class="tabs">
            ${["Features", "Sketch", "Markup", "Evaluate", "MBD Dimensions", "SOLIDWORKS Add-Ins", "MBD"].map((t, i) => html`<button class=${i ? "" : "on"}>${t}</button>`)}
          </nav>
          <div class="panel">
            <div class="grip"><i></i></div>
            <div class="modes">
              ${["part", "props", "config", "target", "ball"].map((n, i) => html`<button class=${i ? "" : "on"} aria-label=${n}><sw-icon name=${n}></sw-icon></button>`)}
              <button class="more" aria-label="More"><sw-icon name="chevron" size="s"></sw-icon></button>
            </div>
            <label class="filter"><sw-icon name="funnel"></sw-icon><input type="text" aria-label="Filter" /></label>
            <ul class="tree">
              <li class="root"><sw-icon name="part"></sw-icon>link1 (Default) &lt;&lt;Default&gt;_Display Sta</li>
              ${tree.map(([i, l, open]) => html`<li class="node"><span class="twist">${open ? html`<i></i>` : nothing}</span><sw-icon name=${i}></sw-icon>${l}</li>`)}
            </ul>
            <div class="scroll"></div>
          </div>
        </aside>
        <section class="view">
          ${this.scene()}
          <div class="hud">${headsUp.map(([n, d]) => this.tool(n, d))}</div>
          <div class="docs">
            ${["prevwin", "nextwin", "min", "restore", "close"].map((n) => html`<button aria-label=${n}><sw-icon name=${n} size="s"></sw-icon></button>`)}
          </div>
          <div class="pane">
            ${["home", "library", "folder", "palette", "ball", "props"].map((n) => html`<button class=${n === "ball" ? "on" : ""} aria-label=${n}><sw-icon name=${n}></sw-icon></button>`)}
          </div>
          <div class="handle"><i></i></div>
        </section>
      </main>

      <nav class="sheets">
        <div class="steps">${["◀", "◀", "▶", "▶"].map((s) => html`<button>${s}</button>`)}</div>
        <button class="on">Model</button><button>3D Views</button><button>Motion Study 1</button>
      </nav>
      <footer class="status">
        <span>SOLIDWORKS Premium 2022 SP5.0</span>
        <span class="mode">Editing Part</span>
        <button class="units">MMGS<i class="drop"></i></button>
        <button class="tagged" aria-label="Tags"><sw-icon name="tag" size="s"></sw-icon></button>
      </footer>

      <div class="task">
        <div class="apps">
          <button class="app" aria-label="Start"><sw-icon name="windows" size="app"></sw-icon></button>
          <label class="find">
            <svg viewBox="0 0 12 12" aria-hidden="true"><circle cx="5" cy="5" r="4" fill="none" stroke="#222" stroke-width="1.300" /><path d="M8 8l3.500 3.500" stroke="#222" stroke-width="1.400" /></svg>
            <input type="text" placeholder="Search" aria-label="Search" />
          </label>
          ${[["tasks", ""], ["edge", ""], ["chrome", "run"], ["files", ""], ["sw", "run on"], ["obs", "run"]].map(
            ([n, c]) => html`<button class="app ${c}" aria-label=${n}><sw-icon name=${n} size="app"></sw-icon>${n === "sw" ? html`<span class="swmark">SW<small>2022</small></span>` : nothing}</button>`,
          )}
        </div>
        <div class="tray">
          <sw-icon name="up" size="s"></sw-icon>
          <sw-icon class="mic" name="mic"></sw-icon><span class="key">VIE</span>
          <sw-icon name="wifi"></sw-icon><sw-icon name="sound"></sw-icon><sw-icon name="battery"></sw-icon>
          <time class="clock">3:40 PM<br />2/3/2026</time>
        </div>
      </div>
    `;
  }
}
